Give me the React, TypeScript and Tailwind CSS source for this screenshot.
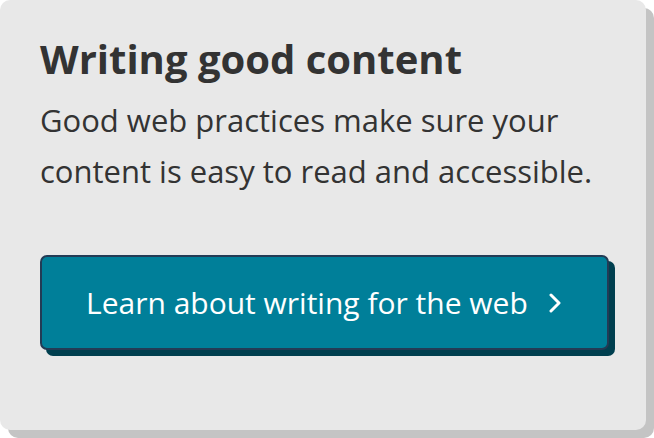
export default function App() {
  return (
    <div className="w-[654px] h-[438px] bg-white" style={{ fontFamily: '"Open Sans", "Noto Sans", sans-serif' }}>
      <div className="w-[646px] h-[430px] rounded-[10px] bg-[#e8e8e8] shadow-[8px_8px_0_#c4c4c4] px-10 pt-[33px]">
        <h2 className="text-[40px] leading-[52px] font-bold text-[#333]">Writing good content</h2>
        <p className="mt-[10px] text-[31px] leading-[51px] text-[#333]">
          Good web practices make sure your
          <br />
          content is easy to read and accessible.
        </p>
        <a
          href="#"
          className="mt-[58px] inline-flex items-center gap-[20px] h-[95px] pl-[44px] pr-[45px] rounded-[7px] border-2 border-[#233b55] bg-[#007f99] shadow-[6px_6px_0_#003f4f] text-white text-[30px] whitespace-nowrap"
        >
          <span>Learn about writing for the web</span>
          <svg width="14" height="20" viewBox="0 0 14 20" fill="none" stroke="white" strokeWidth="3" strokeLinecap="round" strokeLinejoin="round">
            <path d="M3 2l8 8-8 8" />
          </svg>
        </a>
      </div>
    </div>
  );
}
